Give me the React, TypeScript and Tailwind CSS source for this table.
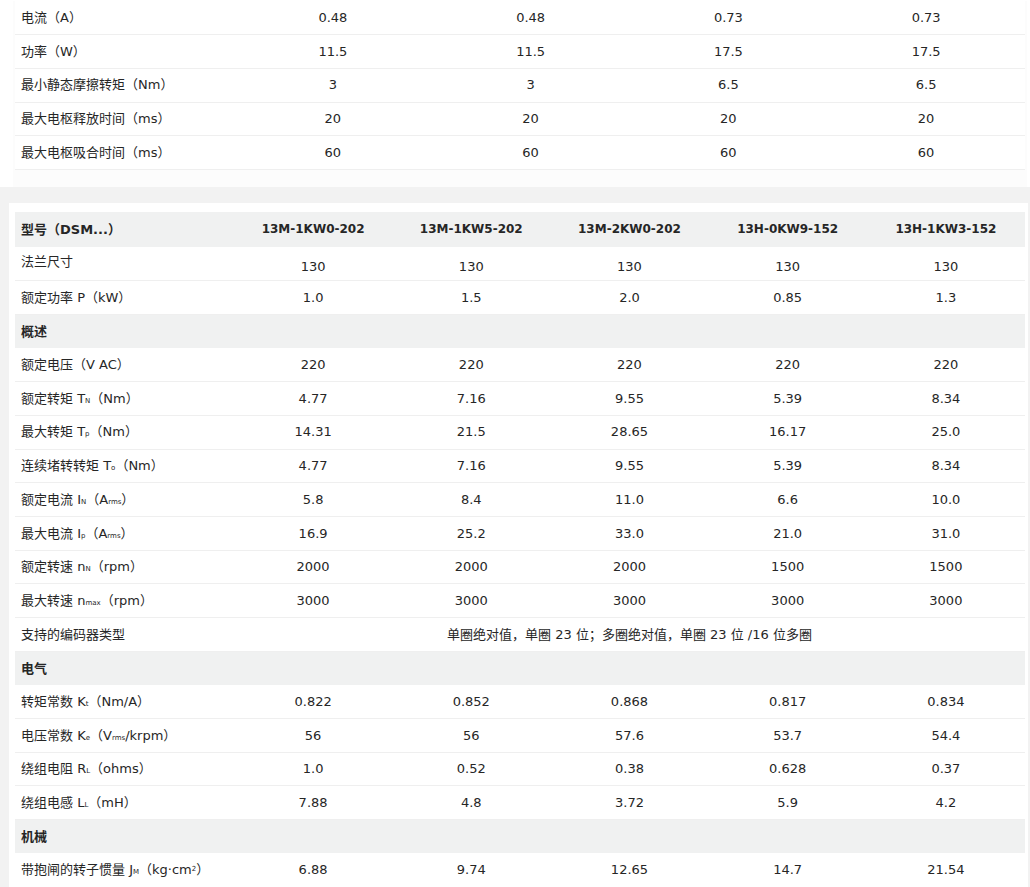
import React from 'react';

type Row =
    | { kind: 'data'; label: React.ReactNode; values: string[]; lowValues?: boolean }
    | { kind: 'section'; label: string }
    | { kind: 'merged'; label: string; text: string };

const Sub = ({ children }: { children: React.ReactNode }) => (
    <span className="text-[7px]">{children}</span>
);

const brakeRows: { label: string; values: string[] }[] = [
    { label: '电流（A）', values: ['0.48', '0.48', '0.73', '0.73'] },
    { label: '功率（W）', values: ['11.5', '11.5', '17.5', '17.5'] },
    { label: '最小静态摩擦转矩（Nm）', values: ['3', '3', '6.5', '6.5'] },
    { label: '最大电枢释放时间（ms）', values: ['20', '20', '20', '20'] },
    { label: '最大电枢吸合时间（ms）', values: ['60', '60', '60', '60'] },
];

const models = ['13M-1KW0-202', '13M-1KW5-202', '13M-2KW0-202', '13H-0KW9-152', '13H-1KW3-152'];

const motorRows: Row[] = [
    { kind: 'data', label: '法兰尺寸', values: ['130', '130', '130', '130', '130'], lowValues: true },
    { kind: 'data', label: '额定功率 P（kW）', values: ['1.0', '1.5', '2.0', '0.85', '1.3'] },
    { kind: 'section', label: '概述' },
    { kind: 'data', label: '额定电压（V AC）', values: ['220', '220', '220', '220', '220'] },
    { kind: 'data', label: <>额定转矩 T<Sub>N</Sub>（Nm）</>, values: ['4.77', '7.16', '9.55', '5.39', '8.34'] },
    { kind: 'data', label: <>最大转矩 T<Sub>p</Sub>（Nm）</>, values: ['14.31', '21.5', '28.65', '16.17', '25.0'] },
    { kind: 'data', label: <>连续堵转转矩 T<Sub>o</Sub>（Nm）</>, values: ['4.77', '7.16', '9.55', '5.39', '8.34'] },
    { kind: 'data', label: <>额定电流 I<Sub>N</Sub>（A<Sub>rms</Sub>）</>, values: ['5.8', '8.4', '11.0', '6.6', '10.0'] },
    { kind: 'data', label: <>最大电流 I<Sub>p</Sub>（A<Sub>rms</Sub>）</>, values: ['16.9', '25.2', '33.0', '21.0', '31.0'] },
    { kind: 'data', label: <>额定转速 n<Sub>N</Sub>（rpm）</>, values: ['2000', '2000', '2000', '1500', '1500'] },
    { kind: 'data', label: <>最大转速 n<Sub>max</Sub>（rpm）</>, values: ['3000', '3000', '3000', '3000', '3000'] },
    { kind: 'merged', label: '支持的编码器类型', text: '单圈绝对值，单圈 23 位；多圈绝对值，单圈 23 位 /16 位多圈' },
    { kind: 'section', label: '电气' },
    { kind: 'data', label: <>转矩常数 K<Sub>t</Sub>（Nm/A）</>, values: ['0.822', '0.852', '0.868', '0.817', '0.834'] },
    { kind: 'data', label: <>电压常数 K<Sub>e</Sub>（V<Sub>rms</Sub>/krpm）</>, values: ['56', '56', '57.6', '53.7', '54.4'] },
    { kind: 'data', label: <>绕组电阻 R<Sub>L</Sub>（ohms）</>, values: ['1.0', '0.52', '0.38', '0.628', '0.37'] },
    { kind: 'data', label: <>绕组电感 L<Sub>L</Sub>（mH）</>, values: ['7.88', '4.8', '3.72', '5.9', '4.2'] },
    { kind: 'section', label: '机械' },
    {
        kind: 'data',
        label: <>带抱闸的转子惯量 J<Sub>M</Sub>（kg·cm<sup className="relative -top-[3px] text-[7px]">2</sup>）</>,
        values: ['6.88', '9.74', '12.65', '14.7', '21.54'],
    },
];

export default function App() {
    return (
        <div className="min-h-screen bg-[#f2f2f2] text-[13px] text-[#262626] font-['DejaVu_Sans','Noto_Sans_CJK_SC',sans-serif]">
            {/* brake table */}
            <div className="bg-white pl-[13px] pr-[3px] pt-[1px]">
                <div className="bg-[#fcfcfc] pl-[2px] pr-[2px] pb-[17px]">
                    <table className="w-full table-fixed border-collapse bg-white">
                        <colgroup>
                            <col className="w-[219px]" />
                            <col />
                            <col />
                            <col />
                            <col />
                        </colgroup>
                        <tbody>
                            {brakeRows.map(r => (
                                <tr key={r.label} className="h-[33.7px] border-b border-[#efefef]">
                                    <td className="pl-[6px] text-left">{r.label}</td>
                                    {r.values.map((v, i) => (
                                        <td key={i} className="text-center">{v}</td>
                                    ))}
                                </tr>
                            ))}
                        </tbody>
                    </table>
                </div>
            </div>

            {/* motor table */}
            <div className="pt-[16px] pl-[9px] pr-[2px]">
                <div className="bg-white pt-[9px] pl-[6px] pr-[3px]">
                    <table className="w-full table-fixed border-collapse">
                        <colgroup>
                            <col className="w-[219px]" />
                            <col />
                            <col />
                            <col />
                            <col />
                            <col />
                        </colgroup>
                        <thead>
                            <tr className="h-[35px] bg-[#f0f1f1] font-bold">
                                <th className="pl-[6px] text-left text-[13px] font-bold">型号（DSM...）</th>
                                {models.map(m => (
                                    <th key={m} className="text-center text-[12px] font-bold">{m}</th>
                                ))}
                            </tr>
                        </thead>
                        <tbody>
                            {motorRows.map((r, idx) => {
                                if (r.kind === 'section') {
                                    return (
                                        <tr key={idx} className="h-[33.7px] bg-[#f0f1f1]">
                                            <td colSpan={6} className="pl-[6px] font-bold">{r.label}</td>
                                        </tr>
                                    );
                                }
                                if (r.kind === 'merged') {
                                    return (
                                        <tr key={idx} className="h-[33.7px] border-b border-[#efefef]">
                                            <td className="pl-[6px]">{r.label}</td>
                                            <td colSpan={5} className="text-center">{r.text}</td>
                                        </tr>
                                    );
                                }
                                return (
                                    <tr key={idx} className="h-[33.7px] border-b border-[#efefef]">
                                        <td className={`pl-[6px] ${r.lowValues ? 'pb-[4px]' : ''}`}>{r.label}</td>
                                        {r.values.map((v, i) => (
                                            <td key={i} className={`text-center ${r.lowValues ? 'pt-[6px]' : ''}`}>{v}</td>
                                        ))}
                                    </tr>
                                );
                            })}
                        </tbody>
                    </table>
                </div>
            </div>
        </div>
    );
}
